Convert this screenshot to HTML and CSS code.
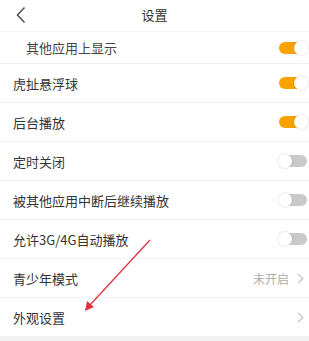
FILE: index.html
```html
<!DOCTYPE html>
<html>
    <head>
        <title>设置</title>
        <link rel="stylesheet" href="styles.css">
    </head>
<body>
    <div class="page">
        <div class="topbar">
            <svg class="back" width="10" height="18" viewBox="0 0 10 18">
                <polyline points="8.5,1.5 1.5,9 8.5,16.5" fill="none" stroke="#555" stroke-width="1.6"/>
            </svg>
            <div class="title">设置</div>
        </div>
        <ul class="list">
            <li class="row first"><span class="label">其他应用上显示</span><span class="switch on"></span></li>
            <li class="row"><span class="label">虎扯悬浮球</span><span class="switch on"></span></li>
            <li class="row"><span class="label">后台播放</span><span class="switch on"></span></li>
            <li class="row"><span class="label">定时关闭</span><span class="switch"></span></li>
            <li class="row"><span class="label">被其他应用中断后继续播放</span><span class="switch"></span></li>
            <li class="row"><span class="label">允许3G/4G自动播放</span><span class="switch"></span></li>
            <li class="row"><span class="label">青少年模式</span><span class="value">未开启</span><span class="more"></span></li>
            <li class="row"><span class="label">外观设置</span><span class="more"></span></li>
        </ul>
        <div class="footer"></div>

        <!-- annotation arrow drawn over the list -->
        <svg class="arrow" width="309" height="341" viewBox="0 0 309 341">
            <line x1="150" y1="240" x2="90" y2="305" stroke="#d9363e" stroke-width="1.3"/>
            <polygon points="85,311 87,301 94,307" fill="#d9363e"/>
        </svg>
    </div>
</body>
</html>
```

FILE: styles.css
```css
body {
    margin: 0;
    background: #fff;
    font-family: "Noto Sans CJK SC", "Noto Sans", sans-serif;
    color: #333;
}

.page {
    position: relative;
    width: 309px;
    height: 341px;
    overflow: hidden;
}

.topbar {
    height: 31px;
    display: flex;
    align-items: center;
    position: relative;
    border-bottom: 1px solid #f6f6f6;
}

.back {
    margin-left: 16px;
    margin-top: -1px;
}

.title {
    position: absolute;
    left: 0;
    right: 0;
    top: 6px;
    text-align: center;
    font-size: 13px;
    line-height: 18px;
    color: #333;
}

.list {
    list-style: none;
    margin: 0;
    padding: 0;
}

.row {
    height: 38px;
    display: flex;
    align-items: center;
    padding: 0 2px 0 13px;
    border-bottom: 1px solid #f2f2f2;
    font-size: 13px;
}

.row.first {
    height: 30px;
    padding-top: 1px;
    padding-left: 26px;
    box-sizing: content-box;
}

.label {
    flex: 1;
    color: #333;
}

.row.first .label {
    color: #444;
    margin-top: -2px;
}

.switch {
    position: relative;
    width: 28px;
    height: 12px;
    border-radius: 6px;
    background: #c9c9cc;
}

.switch::after {
    content: "";
    position: absolute;
    top: -1px;
    left: -1px;
    width: 14px;
    height: 14px;
    border-radius: 50%;
    background: #fff;
    box-shadow: 0 0 1px 1px rgba(0, 0, 0, 0.08);
}

.switch.on {
    background: #f9a300;
}

.switch.on::after {
    left: auto;
    right: -1px;
}

.value {
    font-size: 12px;
    color: #aaa;
    margin-right: 6px;
}

.more {
    width: 6px;
    height: 6px;
    border-top: 1px solid #bbb;
    border-right: 1px solid #bbb;
    transform: rotate(45deg);
    margin-right: 5px;
}

.footer {
    height: 10px;
    background: #f2f2f2;
}

.arrow {
    position: absolute;
    left: 0;
    top: 0;
}
```
